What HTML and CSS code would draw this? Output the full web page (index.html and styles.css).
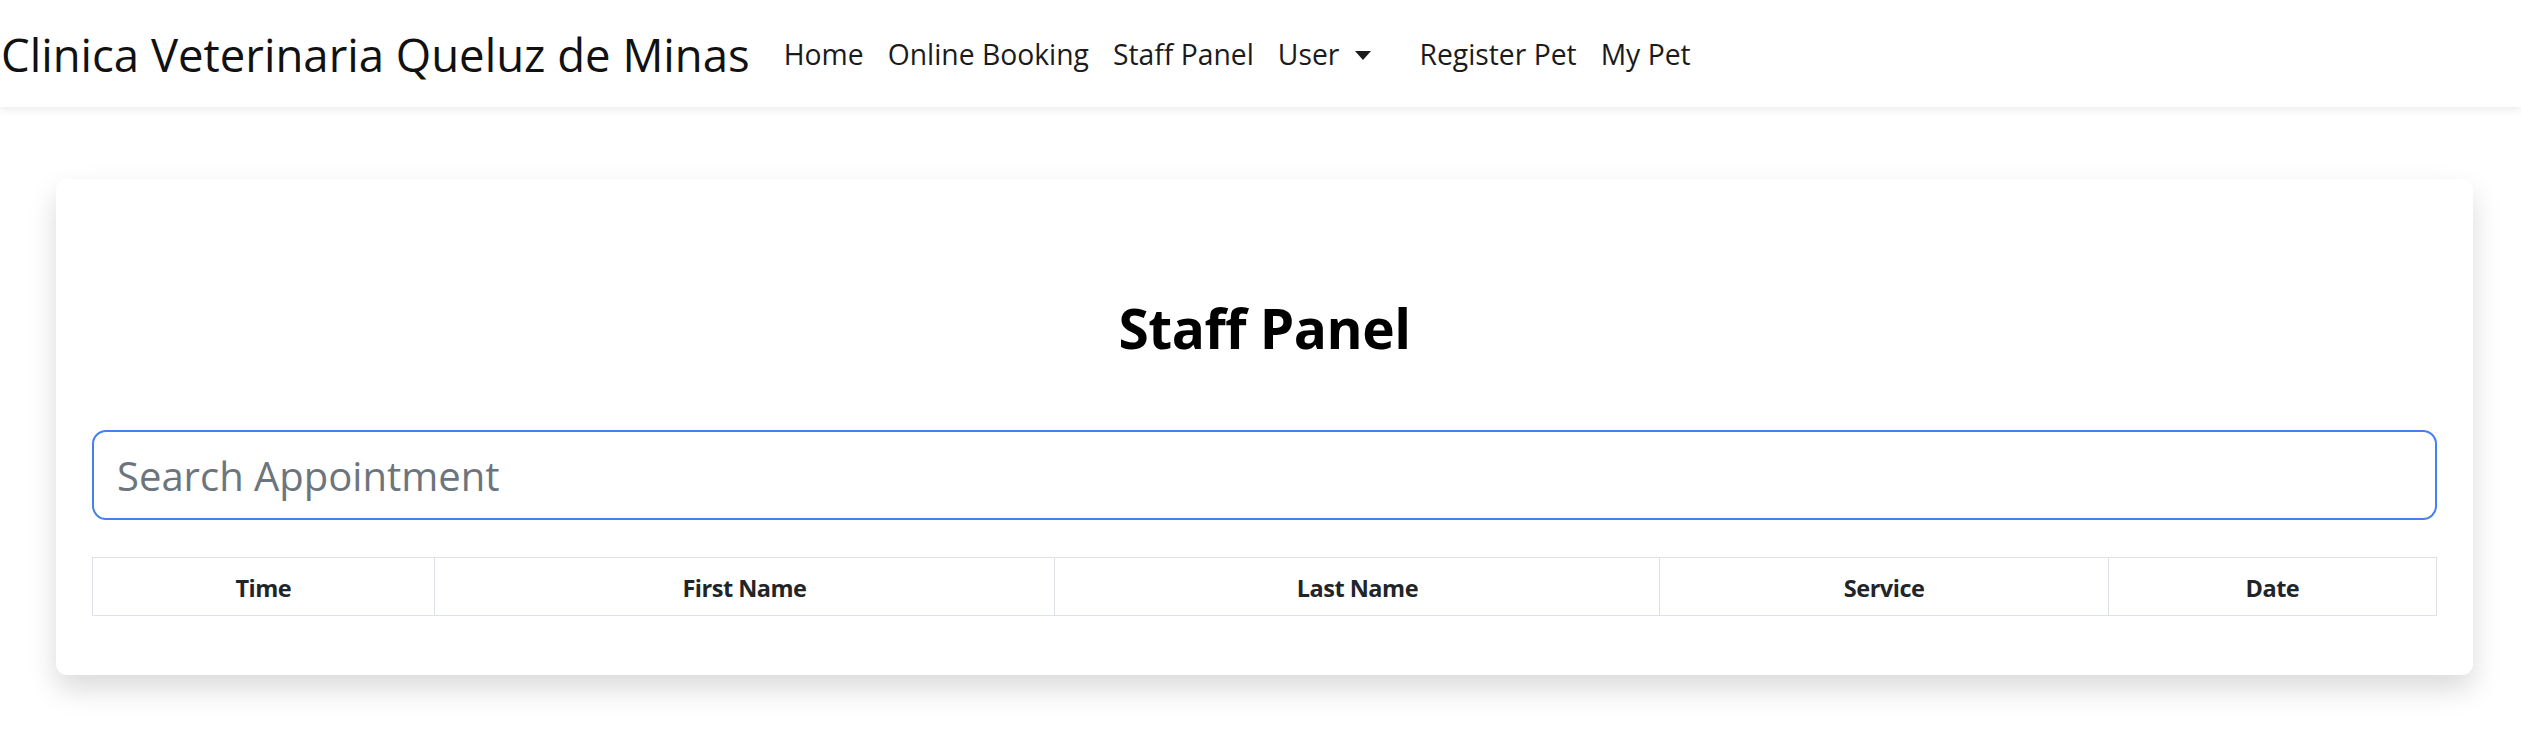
FILE: index.html
```html
<!DOCTYPE html>
<html lang="en">
<head>
<meta charset="utf-8">
<title>Clinica Veterinaria Queluz de Minas</title>
<link rel="stylesheet" href="styles.css">
</head>
<body>
<nav class="navbar">
  <a class="brand" href="#">Clinica Veterinaria Queluz de Minas</a>
  <ul class="nav">
    <li><a class="nav-link" href="#">Home</a></li>
    <li><a class="nav-link" href="#">Online Booking</a></li>
    <li><a class="nav-link" href="#">Staff Panel</a></li>
    <li><a class="nav-link dropdown" href="#">User<span class="caret"></span></a></li>
  </ul>
  <ul class="nav nav-second">
    <li><a class="nav-link" href="#">Register Pet</a></li>
    <li><a class="nav-link" href="#">My Pet</a></li>
  </ul>
</nav>

<main class="page">
  <section class="card">
    <h2 class="title">Staff Panel</h2>
    <input class="search" type="text" placeholder="Search Appointment">
    <table class="table">
      <colgroup>
        <col class="c-time">
        <col class="c-first">
        <col class="c-last">
        <col class="c-service">
        <col class="c-date">
      </colgroup>
      <thead>
        <tr>
          <th>Time</th>
          <th>First Name</th>
          <th>Last Name</th>
          <th>Service</th>
          <th>Date</th>
        </tr>
      </thead>
      <tbody></tbody>
    </table>
  </section>
</main>
</body>
</html>
```

FILE: styles.css
```css
* { box-sizing: border-box; }

html, body {
  margin: 0;
  padding: 0;
  background: #ffffff;
}

body {
  font-family: "Open Sans", "Noto Sans", "Liberation Sans", sans-serif;
  color: #212529;
}

a { text-decoration: none; }

.navbar {
  height: 107px;
  display: flex;
  align-items: center;
  padding: 0 0 0 1px;
  background: #ffffff;
  box-shadow: 0 3px 8px rgba(0, 0, 0, 0.08);
}

.brand {
  font-size: 45.5px;
  color: #111111;
  margin-right: 22px;
  white-space: nowrap;
}

.nav {
  display: flex;
  align-items: center;
  list-style: none;
  margin: 0;
  padding: 0;
}

.nav-second {
  margin-left: 24px;
}

.nav-link {
  display: block;
  font-size: 28.3px;
  color: #1b1b1b;
  padding: 0 12px;
  white-space: nowrap;
}

.caret {
  display: inline-block;
  margin-left: 16px;
  vertical-align: 5px;
  width: 0;
  height: 0;
  border-top: 9px solid #1b1b1b;
  border-left: 8.5px solid transparent;
  border-right: 8.5px solid transparent;
}

.page {
  padding: 72px 48px 40px 56px;
}

.card {
  background: #ffffff;
  border-radius: 11px;
  box-shadow: 0 14px 29px rgba(0, 0, 0, 0.15);
  padding: 114px 36px 59px 36px;
}

.title {
  margin: 0;
  text-align: center;
  font-size: 55px;
  line-height: 69px;
  font-weight: 700;
  color: #000000;
  letter-spacing: -0.5px;
}

.search {
  display: block;
  width: 100%;
  height: 90px;
  margin-top: 68px;
  padding: 0 23px;
  font-family: inherit;
  font-size: 40px;
  color: #212529;
  border: 2px solid #4580f2;
  border-radius: 14px;
  outline: none;
  background: #ffffff;
}

.search::placeholder {
  color: #6c757d;
  opacity: 1;
}

.table {
  width: 100%;
  margin-top: 37px;
  border-collapse: collapse;
  table-layout: fixed;
}

.table th {
  height: 58px;
  padding: 2px 7px 0;
  border: 1.5px solid #dee2e6;
  font-size: 23.5px;
  font-weight: 700;
  text-align: center;
  color: #212529;
  letter-spacing: -0.5px;
}

.c-time { width: 14.57%; }
.c-first { width: 26.49%; }
.c-last { width: 25.81%; }
.c-service { width: 19.13%; }
.c-date { width: 14.0%; }
```
